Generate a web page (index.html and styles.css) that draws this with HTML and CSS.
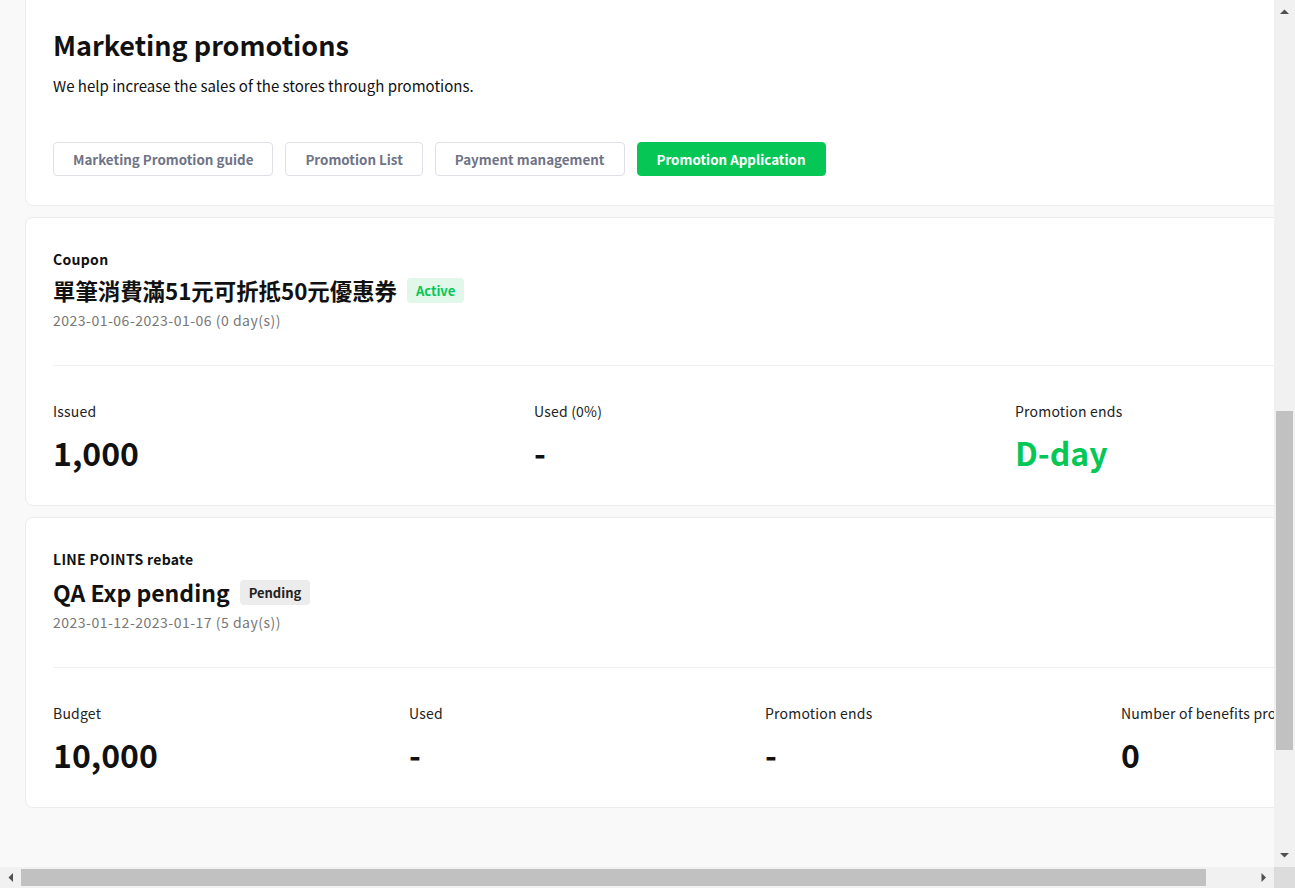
FILE: index.html
```html
<!DOCTYPE html>
<html lang="en">
<head>
<meta charset="utf-8">
<title>Marketing promotions</title>
<link rel="stylesheet" href="styles.css">
</head>
<body>
<div class="viewport">
  <div class="scroll-area">
    <main class="container">
      <section class="card header-card">
        <h1 class="page-title">Marketing promotions</h1>
        <p class="page-desc">We help increase the sales of the stores through promotions.</p>
        <nav class="tabs">
          <button class="tab">Marketing Promotion guide</button>
          <button class="tab">Promotion List</button>
          <button class="tab">Payment management</button>
          <button class="tab tab-primary">Promotion Application</button>
        </nav>
      </section>

      <section class="card promo-card">
        <div class="promo-kind">Coupon</div>
        <div class="promo-head">
          <h2 class="promo-name promo-name-zh" lang="zh-TW">單筆消費滿51元可折抵50元優惠券</h2>
          <span class="badge badge-active">Active</span>
        </div>
        <div class="promo-date">2023-01-06-2023-01-06 (0 day(s))</div>
        <hr class="divider">
        <div class="stats stats-3">
          <div class="stat">
            <div class="stat-label">Issued</div>
            <div class="stat-value">1,000</div>
          </div>
          <div class="stat">
            <div class="stat-label">Used (0%)</div>
            <div class="stat-value">-</div>
          </div>
          <div class="stat">
            <div class="stat-label">Promotion ends</div>
            <div class="stat-value stat-green">D-day</div>
          </div>
        </div>
      </section>

      <section class="card promo-card">
        <div class="promo-kind">LINE POINTS rebate</div>
        <div class="promo-head promo-head-latin">
          <h2 class="promo-name">QA Exp pending</h2>
          <span class="badge badge-pending">Pending</span>
        </div>
        <div class="promo-date">2023-01-12-2023-01-17 (5 day(s))</div>
        <hr class="divider">
        <div class="stats stats-4">
          <div class="stat">
            <div class="stat-label">Budget</div>
            <div class="stat-value">10,000</div>
          </div>
          <div class="stat">
            <div class="stat-label">Used</div>
            <div class="stat-value">-</div>
          </div>
          <div class="stat">
            <div class="stat-label">Promotion ends</div>
            <div class="stat-value">-</div>
          </div>
          <div class="stat">
            <div class="stat-label">Number of benefits provided</div>
            <div class="stat-value">0</div>
          </div>
        </div>
      </section>
    </main>
  </div>

  <div class="vscroll">
    <div class="sb-btn">
      <svg width="21" height="21" viewBox="0 0 21 21"><path d="M6 14H15L10.5 9.5Z" fill="#505050"/></svg>
    </div>
    <div class="vtrack">
      <div class="vthumb" style="margin-top:390px;height:339px"></div>
    </div>
    <div class="sb-btn">
      <svg width="21" height="21" viewBox="0 0 21 21"><path d="M6 7H15L10.5 11.5Z" fill="#505050"/></svg>
    </div>
  </div>

  <div class="hscroll">
    <div class="sb-btn">
      <svg width="21" height="21" viewBox="0 0 21 21"><path d="M13 6V15L8.5 10.5Z" fill="#505050"/></svg>
    </div>
    <div class="htrack">
      <div class="hthumb" style="width:1185px"></div>
    </div>
    <div class="sb-btn">
      <svg width="21" height="21" viewBox="0 0 21 21"><path d="M8.5 6V15L13 10.5Z" fill="#505050"/></svg>
    </div>
  </div>

  <div class="sb-corner"></div>
</div>
</body>
</html>
```

FILE: styles.css
```css
html,
body {
  margin: 0;
  height: 100%;
  overflow: hidden;
  background: #f9f9f9;
}
body {
  font-family: "Noto Sans CJK KR", "Noto Sans", sans-serif;
  color: #111;
}

/* window frame: content + scrollbars */
.viewport {
  width: 1295px;
  height: 888px;
  display: grid;
  grid-template-columns: 1274px 21px;
  grid-template-rows: 867px 21px;
}
.scroll-area {
  overflow: hidden;
  background: #f9f9f9;
}

.vscroll {
  display: flex;
  flex-direction: column;
  background: #f1f1f1;
}
.hscroll {
  display: flex;
  background: #f1f1f1;
}
.sb-btn {
  flex: 0 0 21px;
  width: 21px;
  height: 21px;
}
.sb-btn svg {
  display: block;
}
.vtrack {
  flex: 1;
  padding: 0 2px;
}
.vthumb {
  background: #c1c1c1;
}
.htrack {
  flex: 1;
  padding: 2px 0;
}
.hthumb {
  height: 17px;
  background: #c1c1c1;
}
.sb-corner {
  background: #dcdcdc;
}

/* page */
.container {
  margin-top: -16px;
  padding-left: 25px;
  display: flex;
  flex-direction: column;
  gap: 11px;
}
.card {
  width: 1290px;
  box-sizing: border-box;
  background: #fff;
  border: 1px solid #ececec;
  border-radius: 8px;
  overflow: hidden;
}

.header-card {
  padding: 40px 27px 29px;
}
.page-title {
  margin: 0;
  font-size: 27px;
  line-height: 40px;
  font-weight: 700;
  color: #111;
}
.page-desc {
  margin: 10px 0 0;
  font-size: 15px;
  line-height: 22px;
  color: #111;
}
.tabs {
  margin-top: 45px;
  display: flex;
  gap: 12px;
}
.tab {
  height: 34px;
  padding: 0 19px;
  border: 1px solid #dfe0e6;
  border-radius: 4px;
  background: #fff;
  font-family: inherit;
  font-size: 13.4px;
  font-weight: 700;
  color: #6f7386;
  line-height: 32px;
}
.tab-primary {
  background: #06c755;
  border-color: #06c755;
  color: #fff;
}

.promo-card {
  padding: 31px 27px 31px;
}
.promo-kind {
  font-size: 14px;
  line-height: 20px;
  font-weight: 700;
  letter-spacing: 0.3px;
  color: #111;
}
.promo-head {
  margin-top: 4px;
  display: flex;
  align-items: center;
  gap: 10px;
  height: 34px;
}
.promo-head-latin {
  margin-top: 6px;
}
.promo-name {
  margin: 0;
  font-size: 23px;
  line-height: 34px;
  font-weight: 700;
  color: #111;
}
.promo-name-zh {
  font-family: "Noto Sans CJK TC", "Noto Sans CJK KR", sans-serif;
  font-size: 22.4px;
}
.badge {
  height: 25px;
  padding: 0 9px;
  border-radius: 4px;
  font-size: 13px;
  line-height: 25px;
  font-weight: 700;
}
.badge-active {
  background: #e0f7e9;
  color: #06c755;
}
.badge-pending {
  background: #ececec;
  color: #222;
}
.promo-date {
  margin-top: 3px;
  font-size: 14px;
  line-height: 20px;
  letter-spacing: 0.5px;
  color: #777;
}
.divider {
  margin: 35px 0 0;
  border: 0;
  border-top: 1px solid #f0f0f0;
  height: 0;
}
.stats {
  margin-top: 35px;
  display: grid;
}
.stats-3 {
  grid-template-columns: repeat(3, 481px);
}
.stats-4 {
  grid-template-columns: repeat(4, 356px);
}
.stat-label {
  font-size: 14px;
  line-height: 20px;
  letter-spacing: 0.2px;
  color: #222;
  white-space: nowrap;
}
.stat-value {
  margin-top: 9px;
  font-size: 32px;
  line-height: 44px;
  font-weight: 700;
  color: #111;
}
.stat-green {
  color: #06c755;
}
```
